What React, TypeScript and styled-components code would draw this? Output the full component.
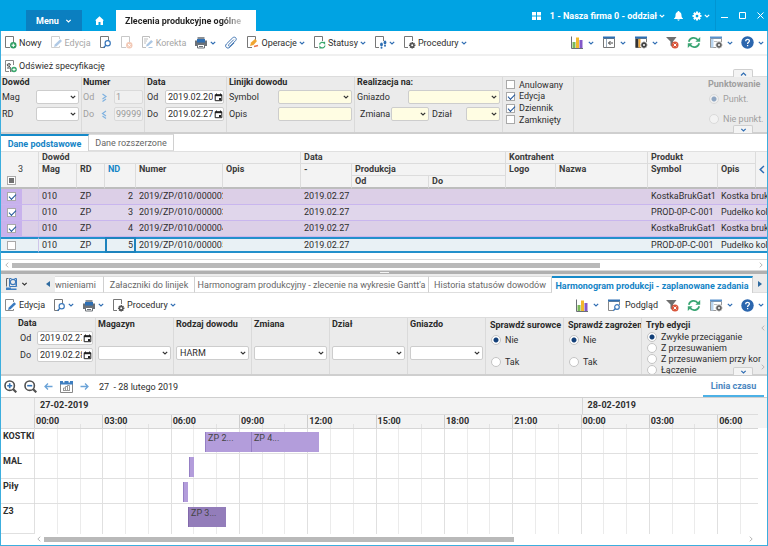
import React from "react";
import styled, { createGlobalStyle, css } from "styled-components";

const GlobalStyle = createGlobalStyle`
  * { box-sizing: border-box; }
  html, body { margin: 0; background: #fff; }
  body, button, input, select, table {
    font-family: Roboto, "Liberation Sans", sans-serif;
    font-size: 9px;
    line-height: 12px;
    color: #2e2e2e;
  }
  button { border: 0; background: none; padding: 0; margin: 0; }
  input, select { margin: 0; }
`;

const BLUE = "#00a3e3";
const LINK = "#2f6db3";

/* ---------- icons ---------- */

const Svg = styled.svg<{ $w: number; $h: number }>`
  display: block;
  flex: none;
  width: ${(p) => p.$w}px;
  height: ${(p) => p.$h}px;
  fill: none;
`;

type IconProps = { w?: number; h?: number; box?: string; children?: React.ReactNode };
const Icon = ({ w = 13, h = 13, box, children }: IconProps) => (
  <Svg $w={w} $h={h} viewBox={box ?? `0 0 ${w} ${h}`} aria-hidden="true">
    {children}
  </Svg>
);

const Chevron = ({ color = LINK, w = 6 }: { color?: string; w?: number }) => (
  <Icon w={w} h={4} box="0 0 6 4">
    <path d="M.8.8 3 3 5.2.8" stroke={color} strokeWidth="1.2" />
  </Icon>
);

const Sheet = () => <path d="M6 11.500H1.500V.500H9.500V6" stroke="#777" />;
const SheetCorner = ({ color = "#777" }: { color?: string }) => (
  <path d="M5 11.500H1.500V.500h8V5" stroke={color} />
);

const gearTeeth = "M0-3.600V3.600M-3.600 0H3.600M-2.500-2.500 2.500 2.500M-2.500 2.500 2.500-2.500";
const Gear = ({ x, y, s = 1, color = "#555", hole = "#fff" }: { x: number; y: number; s?: number; color?: string; hole?: string }) => (
  <g transform={`translate(${x} ${y}) scale(${s})`}>
    <path d={gearTeeth} stroke={color} strokeWidth="1.700" />
    <circle r="2.500" fill={color} />
    <circle r="1.100" fill={hole} />
  </g>
);

const NewIcon = () => (
  <Icon>
    <Sheet />
    <circle cx="9.300" cy="9.300" r="3.200" fill="#2e9e62" />
    <path d="M9.300 7.500v3.600M7.500 9.300h3.600" stroke="#fff" strokeWidth="1.100" />
  </Icon>
);
const EditIcon = ({ dim }: { dim?: boolean }) => (
  <Icon>
    <g opacity={dim ? 0.4 : 1}>
      <path d="M9.500 10v1.500h-8V.500h8V3" stroke="#8a8a8a" />
      <path d="m4 11 .800-2.600 5.400-5.200 1.800 1.800-5.400 5.200Z" fill="#3b7bc0" />
    </g>
  </Icon>
);
const PreviewIcon = () => (
  <Icon>
    <Sheet />
    <circle cx="8.700" cy="7.300" r="2.600" fill="#fff" stroke="#3b78bb" strokeWidth="1.200" />
    <path d="m6.900 9.200-2.400 2.500" stroke="#3b78bb" strokeWidth="1.400" />
  </Icon>
);
const DeleteIcon = () => (
  <Icon>
    <g opacity=".4">
      <Sheet />
      <circle cx="9.300" cy="9.300" r="3.200" fill="#e07a4a" />
      <path d="m8 8 2.600 2.600M10.600 8 8 10.600" stroke="#fff" />
    </g>
  </Icon>
);
const FixIcon = () => (
  <Icon>
    <g opacity=".42">
      <path d="M8.500 2V.500h-7v11H5M3 3h4M3 5h3M3 7h2" stroke="#666" />
      <path d="m5 10.500.700-2 4.500-4.500 1.800 1.800L7.200 10Z" fill="#3b7bc0" />
      <path d="M7.500 11.500h4" stroke="#3b7bc0" />
    </g>
  </Icon>
);
const PrintIcon = () => (
  <Icon w={14}>
    <path d="M3.500 1h7v3h-7z" fill="#8b8f94" />
    <path d="M1 4.500h12V10H1z" fill="#6b7076" />
    <path d="M3 3h8v3.500H3z" fill="#2f6fb3" />
    <path d="M3.500 8.500h7v3.500h-7z" fill="#fff" stroke="#6b7076" />
    <path d="M5 10.500h4" stroke="#6b7076" />
  </Icon>
);
const ClipIcon = () => (
  <Icon w={14}>
    <path
      d="m9.800 3.600-5 5c-.900 1.100.500 2.300 1.500 1.300l5.300-5.300c2-2.200-.900-4.700-3-2.700L2.400 8c-2.300 2.700 1 5.500 3.500 3.200l4.300-4.300"
      stroke="#3f74b2"
    />
  </Icon>
);
const OperateIcon = () => (
  <Icon>
    <Sheet />
    <path d="m4 10 1-3.500 4-3.500 2 2-3.500 4Z" fill="#f0a531" />
    <path d="m8 10.500 4-1" stroke="#e8744b" strokeWidth="1.500" />
  </Icon>
);
const StatusIcon = () => (
  <Icon>
    <SheetCorner />
    <path d="M6.500 8.500a2.900 2.900 0 0 1 5-1.200V5.800M12 9.500a2.900 2.900 0 0 1-5 1.500v1.500" stroke="#3aa76d" strokeWidth="1.300" />
  </Icon>
);
const StepsIcon = () => (
  <Icon>
    <SheetCorner />
    <ellipse cx="7.500" cy="8.500" rx="1.400" ry="2" fill="#2f6fb3" />
    <circle cx="7.500" cy="11.700" r="1" fill="#2f6fb3" />
    <ellipse cx="11" cy="6.500" rx="1.400" ry="2" fill="#2f6fb3" />
    <circle cx="11" cy="9.800" r="1" fill="#2f6fb3" />
  </Icon>
);
const ProcIcon = () => (
  <Icon>
    <SheetCorner />
    <Gear x={9.2} y={9.2} s={0.9} />
  </Icon>
);
const ChartIcon = () => (
  <Icon w={14}>
    <path d="M1.500.500v12H13" stroke="#6b7076" />
    <path d="M2.500 6h3v6h-3z" fill="#7cb95a" />
    <path d="M6 1.500h3V12H6z" fill="#f2b92c" />
    <path d="M9.500 4h3v8h-3z" fill="#8359c9" />
  </Icon>
);
const PanelIcon = () => (
  <Icon w={14}>
    <path d="M1.500 2.500h11v9h-11z" fill="#fff" stroke="#777" />
    <path d="M1 1.500h12" stroke="#2f6fb3" strokeWidth="2" />
    <path d="M4.500 3v8" stroke="#9ab" />
    <path d="M11 7H6.500M8.500 5l-2 2 2 2" stroke="#444" />
  </Icon>
);
const ColumnsIcon = () => (
  <Icon w={14}>
    <path d="M1.500 2.500h11v9h-11z" fill="#fff" stroke="#777" />
    <path d="M1 1.500h12" stroke="#2f6fb3" strokeWidth="2" />
    <path d="M2 3h2.500v8.500H2z" fill="#333" />
    <path d="M4.500 3h2v8.500h-2z" fill="#f0a531" />
    <circle cx="10" cy="9" r="3.700" fill="#fff" />
    <Gear x={10} y={9} s={0.9} color="#444" />
  </Icon>
);
const FilterIcon = () => (
  <Icon>
    <path d="M0 1h10.500L7 5.500v6l-2.500-2v-4Z" fill="#6f6f6f" />
    <circle cx="9" cy="9" r="3.500" fill="#d9553a" />
    <path d="m7.600 7.600 2.800 2.800M10.400 7.600l-2.800 2.800" stroke="#fff" />
  </Icon>
);
const RefreshIcon = () => (
  <Icon w={14}>
    <path d="M1.800 5.800C2.800 1.500 8.500.300 11 4.200M12.200 7.200C11.200 11.500 5.500 12.700 3 8.800" stroke="#3aa573" strokeWidth="1.700" />
    <path d="M13.200 1v4.800H8.400ZM.8 12V7.200h4.800Z" fill="#3aa573" />
  </Icon>
);
const ViewIcon = () => (
  <Icon w={14}>
    <path d="M1.500 2.500h11v9h-11z" fill="#fff" stroke="#999" />
    <path d="M1 1.500h12" stroke="#5a92cc" strokeWidth="2" />
    <path d="M2 3h2.500v8.500H2z" fill="#b9d4ee" />
    <path d="M5 5.500h7" stroke="#bbb" />
    <circle cx="10" cy="9" r="3.700" fill="#fff" />
    <Gear x={10} y={9} s={0.9} color="#666" />
  </Icon>
);
const WindowPreviewIcon = () => (
  <Icon w={14}>
    <path d="M6 11.500H1.500v-9h11V6" stroke="#888" />
    <path d="M1 1.500h12" stroke="#2f6fb3" strokeWidth="2" />
    <circle cx="10" cy="8" r="2.300" stroke="#3b78bb" strokeWidth="1.200" />
    <path d="m8.300 9.700-2.100 2.100" stroke="#3b78bb" strokeWidth="1.300" />
  </Icon>
);
const HelpIcon = () => (
  <Icon>
    <circle cx="6.500" cy="6.500" r="6.200" fill="#2b66ae" />
    <path d="M4.700 5.200c0-2.600 3.800-2.400 3.700-.200C8.300 6.300 6.600 6.400 6.600 8M6.600 8.900v1.400" stroke="#fff" strokeWidth="1.300" />
  </Icon>
);
const SpecIcon = () => (
  <Icon>
    <SheetCorner color="#888" />
    <path d="M3 5h3.500a1.600 1.600 0 1 0-.500 1.300M3 8h3" stroke="#555" />
    <path d="M6.500 7v5M6.500 11h4" stroke="#777" />
    <circle cx="10" cy="9.500" r="2.800" fill="#3aa76d" />
    <path d="M10 8v3M8.500 9.500h3" stroke="#fff" strokeWidth=".900" />
  </Icon>
);
const CalendarGlyph = () => (
  <Icon w={9} h={9}>
    <path d="M1.200 1.700h6.600v6H1.200z" stroke="#222" />
    <path d="M1 2.500h7" stroke="#222" strokeWidth="1.400" />
    <path d="M2.500.500v1.500M6.500.500v1.500" stroke="#222" />
    <path d="M5 5h2v2H5z" fill="#222" />
  </Icon>
);
const PagesIcon = () => (
  <Icon>
    <path d="M1.500.500v8M3.500.500h-2" stroke="#666" />
    <path d="M1 9.500h5v2.500H1zM6 10.500h5.500V12H6z" fill="#3f7fc1" />
    <circle cx="8" cy="4" r="2.700" stroke="#3b78bb" strokeWidth="1.200" />
    <path d="m9.800 6 2 2.300M6.500.500h-2v8H11.500V.500H9.500" stroke="#3b78bb" />
  </Icon>
);
const ZoomGlass = ({ plus }: { plus?: boolean }) => (
  <Icon>
    <circle cx="5.700" cy="5.700" r="4.700" stroke="#505050" strokeWidth="1.600" />
    <path d="m9 9 3.300 3.300" stroke="#505050" strokeWidth="2.200" />
    <path d={plus ? "M3.200 5.700h5M5.700 3.200v5" : "M3.200 5.700h5"} stroke="#2f6fb3" strokeWidth="1.600" />
  </Icon>
);
const Arrow = ({ back }: { back?: boolean }) => (
  <Icon w={9} h={9}>
    <path d={back ? "M8.500 4.500H1M4 1.500l-3 3 3 3" : "M.5 4.500H8M5 1.500l3 3-3 3"} stroke="#6ba3d8" strokeWidth="1.300" />
  </Icon>
);
const CalendarIcon = () => (
  <Icon>
    <path d="M.5 3.500h12v9H.5z" stroke="#888" />
    <path d="M0 1h3v1.500h1.500V1h4v1.500H10V1h3v3.500H0z" fill="#3f7fc1" />
    <path d="M3.500 10.500V8h2v2.500M5.500 10.500v-4h2v4M7.500 10.500v-5h2v5M3 10.500h7" stroke="#999" />
  </Icon>
);

/* ---------- title bar ---------- */

const TitleBar = styled.header`
  display: flex;
  align-items: flex-end;
  height: 31px;
  padding-left: 26px;
  background: ${BLUE};
  color: #fff;
`;
const MenuButton = styled.button`
  display: flex;
  align-items: center;
  justify-content: center;
  gap: 6px;
  width: 56px;
  height: 21px;
  background: #0b7fc0;
  color: #fff;
  font-weight: 700;
`;
const HomeButton = styled.button`
  display: grid;
  place-items: center;
  width: 34px;
  height: 21px;
`;
const DocTab = styled.button`
  width: 140px;
  height: 21px;
  padding: 0 9px;
  font-weight: 700;
  text-align: left;
  white-space: nowrap;
  overflow: hidden;
  color: transparent;
  background: linear-gradient(90deg, #222 106px, #aaa 120px, #ddd 131px) text, #fff;
`;
const TitleRight = styled.div`
  display: flex;
  align-items: center;
  align-self: stretch;
  gap: 5px;
  margin-left: auto;
`;
const TitleTools = styled.div`
  display: flex;
  align-items: center;
  gap: 9px;
`;
const TitleButton = styled.button`
  display: flex;
  align-items: center;
  gap: 2px;
  color: #fff;
  font-weight: 700;
`;
const WindowButtons = styled.div`
  display: flex;
  align-items: center;
  align-self: stretch;
  gap: 11px;
  padding: 0 4px 0 5px;
  border-left: 1px solid #0095d2;
`;

/* ---------- frame, toolbars ---------- */

const Page = styled.div`
  display: flex;
  flex-direction: column;
  min-height: 100vh;
`;
const Frame = styled.main`
  flex: 1;
  display: flex;
  flex-direction: column;
  min-width: 0;
  border: 1px solid #3caede;
  border-top: 0;
`;
const Toolbar = styled.div<{ $h: number; $line?: boolean }>`
  display: flex;
  align-items: center;
  height: ${(p) => p.$h}px;
  padding: 0 3px;
  background: #fff;
  ${(p) => p.$line && css`border-bottom: 2px solid #f0f0f0;`}
`;
const ToolButton = styled.button`
  display: flex;
  align-items: center;
  gap: 2px;
  white-space: nowrap;
  &:disabled { color: #a6a6a6; }
`;
const ToolGroup = styled.div`
  display: flex;
  align-items: center;
  gap: 8px;
`;
const ToolRight = styled(ToolGroup)`
  margin-left: auto;
  ${ToolButton} { gap: 4px; }
`;
const Tool = ({ icon, label, menu, disabled, name }: { icon: React.ReactNode; label?: string; menu?: boolean; disabled?: boolean; name?: string }) => (
  <ToolButton type="button" disabled={disabled} aria-label={label ? undefined : name}>
    {icon}
    {label && <span>{label}</span>}
    {menu && <Chevron />}
  </ToolButton>
);

/* ---------- filter panels ---------- */

const Filters = styled.form<{ $h: number }>`
  position: relative;
  display: flex;
  height: ${(p) => p.$h}px;
  background: #ebebeb;
  border-top: 1px solid #dcdcdc;
  border-bottom: 2px solid #cfcfcf;
`;
const Group = styled.fieldset<{ $w?: number; $pad?: number; $top?: number; $last?: boolean }>`
  display: flex;
  flex-direction: column;
  gap: 3px;
  min-width: 0;
  margin: 0;
  padding: ${(p) => p.$top ?? 0}px 2px 0 ${(p) => p.$pad ?? 2}px;
  border: 0;
  border-right: ${(p) => (p.$last ? 0 : 1)}px solid #dadada;
  overflow: hidden;
  ${(p) => (p.$w ? css`flex: 0 0 ${p.$w}px;` : css`flex: 1;`)}
`;
const StackGroup = styled(Group)`
  justify-content: space-between;
  padding-top: 1px;
  padding-bottom: 14px;
`;
const Heading = styled.div<{ $indent?: number; $dim?: boolean }>`
  flex: none;
  height: 10px;
  padding-left: ${(p) => p.$indent ?? 0}px;
  line-height: 11px;
  font-weight: 700;
  white-space: nowrap;
  color: ${(p) => (p.$dim ? "#9f9f9f" : "#2a2a2a")};
`;
const RadioHeading = styled(Heading)`
  height: 13px;
  line-height: 15px;
`;
const Field = styled.label<{ $label: number; $dim?: boolean }>`
  display: grid;
  grid-template-columns: ${(p) => p.$label}px 1fr;
  align-items: center;
  flex: none;
  white-space: nowrap;
  color: ${(p) => (p.$dim ? "#9f9f9f" : "inherit")};
`;
const FieldLine = styled.div<{ $cols: string; $indent: number }>`
  display: grid;
  grid-template-columns: ${(p) => p.$cols};
  align-items: center;
  column-gap: 3px;
  padding-left: ${(p) => p.$indent}px;
`;
const control = css`
  width: 100%;
  min-width: 0;
  height: 14px;
  border: 1px solid #cdcdcd;
  border-radius: 2px;
  padding: 0 3px;
  outline: 0;
`;
const TextInput = styled.input<{ $yellow?: boolean }>`
  ${control}
  background: ${(p) => (p.$yellow ? "#fffde3" : "#fff")};
  &:disabled { background: #f0f0f0; color: #9a9a9a; border-color: #dadada; padding: 0 0 0 1px; }
`;
const ControlBox = styled.span`
  position: relative;
  display: flex;
  align-items: center;
  min-width: 0;
`;
const ControlGlyph = styled.span<{ $right: number }>`
  position: absolute;
  right: ${(p) => p.$right}px;
  pointer-events: none;
`;
const SelectInput = styled.select<{ $yellow?: boolean }>`
  ${control}
  appearance: none;
  padding-right: 12px;
  background: ${(p) => (p.$yellow ? "#fffde3" : "#fff")};
`;
const DateInput = styled.input`
  ${control}
  background: #fff;
  padding: 0 10px 0 2px;
`;
const Select = ({ value = "", yellow, name }: { value?: string; yellow?: boolean; name?: string }) => (
  <ControlBox>
    <SelectInput $yellow={yellow} defaultValue={value} aria-label={name}>
      <option value={value}>{value}</option>
    </SelectInput>
    <ControlGlyph $right={3}><Chevron color="#333" /></ControlGlyph>
  </ControlBox>
);
const DateBox = ({ value }: { value: string }) => (
  <ControlBox>
    <DateInput defaultValue={value} />
    <ControlGlyph $right={1}><CalendarGlyph /></ControlGlyph>
  </ControlBox>
);
const Prefix = styled.span`
  display: grid;
  grid-template-columns: 13px 29px;
  align-items: center;
`;
const Compare = ({ less }: { less?: boolean }) => (
  <Icon w={7} h={9}>
    <path d={less ? "M5 1 1.500 3.500 5 6M5 8.500 1.500 6" : "M1.500 1 5 3.500 1.500 6M5 6 1.500 8.500"} stroke="#7fb2e0" strokeWidth="1.200" />
  </Icon>
);
const Options = styled.div<{ $gap?: number; $top?: number; $left?: number }>`
  display: flex;
  flex-direction: column;
  gap: ${(p) => p.$gap ?? 0}px;
  padding: ${(p) => p.$top ?? 0}px 0 0 ${(p) => p.$left ?? 1}px;
`;
const TightOptions = styled(Options)`
  margin-top: -3px;
`;
const Choice = styled.label<{ $h: number; $dim?: boolean }>`
  display: flex;
  align-items: center;
  gap: 4px;
  height: ${(p) => p.$h}px;
  white-space: nowrap;
  color: ${(p) => (p.$dim ? "#9f9f9f" : "inherit")};
`;
const CheckBox = styled.input.attrs({ type: "checkbox" })<{ $partial?: boolean }>`
  appearance: none;
  position: relative;
  display: block;
  flex: none;
  width: 9px;
  height: 9px;
  border: 1px solid #a9a9a9;
  background: #fff;
  &:checked::after {
    content: "";
    position: absolute;
    left: 1px;
    top: 1px;
    width: 6px;
    height: 3px;
    border-left: 1px solid #1f559b;
    border-bottom: 1px solid #1f559b;
    transform: rotate(-45deg);
  }
  ${(p) => p.$partial && css`
    &::after { content: ""; position: absolute; inset: 1px; background: #707070; }
  `}
`;
const Radio = styled.input.attrs({ type: "radio" })`
  appearance: none;
  flex: none;
  width: 10px;
  height: 10px;
  border: 1px solid #c4c4c4;
  border-radius: 50%;
  background: #fff;
  &:checked { background: radial-gradient(circle, #123f78 0 2px, #fff 3px); }
  &:disabled { border-color: #dadada; background: #f3f3f3; }
  &:disabled:checked { background: radial-gradient(circle, #8fa6c2 0 2px, #f0f0f0 3px); }
`;
const Flap = styled.button<{ $up?: boolean }>`
  position: absolute;
  right: 14px;
  ${(p) => (p.$up ? "top: -8px;" : "bottom: -1px;")}
  display: grid;
  place-items: center;
  width: 20px;
  height: 8px;
  border: 1px solid #cfcfcf;
  border-bottom: 0;
  border-radius: 2px 2px 0 0;
  background: #f4f4f4;
`;
const SideArrows = styled.div`
  display: flex;
  flex-direction: column;
  justify-content: space-between;
  padding: 7px 2px 4px 0;
`;

/* ---------- tabs ---------- */

const TabBar = styled.div<{ $h: number; $grey?: boolean }>`
  display: flex;
  align-items: stretch;
  height: ${(p) => p.$h}px;
  background: ${(p) => (p.$grey ? "#ececec" : "#fff")};
`;
const Tab = styled.button<{ $active?: boolean; $w: number; $cut?: boolean }>`
  display: flex;
  justify-content: ${(p) => (p.$cut ? "flex-start" : "center")};
  align-items: center;
  flex: 0 1 ${(p) => p.$w}px;
  overflow: hidden;
  white-space: nowrap;
  background: #fff;
  border-right: 1px solid #d0d0d0;
  border-top: ${(p) => (p.$active ? "2px solid #168ac9" : "1px solid #dcdcdc")};
  border-bottom: ${(p) => (p.$active ? "0" : "1px solid #dedede")};
  color: ${(p) => (p.$active ? "#1384c6" : "#666")};
  font-weight: ${(p) => (p.$active ? 700 : 400)};
`;
const TabLead = styled.div`
  display: flex;
  align-items: center;
  gap: 3px;
  flex: 0 0 54px;
  padding: 0 5px 0 4px;
  border-bottom: 1px solid #dedede;
`;
const TabTail = styled.div`
  display: flex;
  align-items: center;
  justify-content: center;
  flex: 1;
  border-bottom: 1px solid #dedede;
`;
const Push = styled.span`
  margin-left: auto;
`;

/* ---------- document table ---------- */

const GridBox = styled.div`
  border-top: 1px solid #e0e0e0;
  overflow: hidden;
`;
const DataTable = styled.table`
  width: 100%;
  table-layout: fixed;
  border-collapse: separate;
  border-spacing: 0;
  th, td { padding: 0 0 0 3px; text-align: left; white-space: nowrap; overflow: hidden; }
`;
const Th = styled.th<{ $h?: number; $sorted?: boolean; $flat?: boolean }>`
  height: ${(p) => p.$h ?? 12}px;
  vertical-align: top;
  background: #f3f3f3;
  border-right: 1px solid #dcdcdc;
  border-bottom: ${(p) => (p.$flat ? "1px solid #dcdcdc" : "2px solid #bdbdbd")};
  color: ${(p) => (p.$sorted ? "#1384c6" : "#3a3a3a")};
  line-height: 11px;
  font-weight: 700;
`;
const CornerCell = styled(Th)`
  vertical-align: bottom;
  font-weight: 400;
`;
const EdgeCell = styled(Th)`
  vertical-align: middle;
  border-right: 0;
`;
const CornerStack = styled.div`
  display: grid;
  grid-template-columns: 9px 1fr;
  column-gap: 2px;
  row-gap: 1px;
  padding: 0 0 2px 3px;
  justify-items: start;
  & > span { grid-column: 2; }
  & > input { grid-row: 2; }
`;
const Row = styled.tr<{ $tone: string; $line: string; $current?: boolean }>`
  height: 16px;
  td {
    height: 16px;
    background: ${(p) => p.$tone};
    border-bottom: 1px solid ${(p) => p.$line};
    line-height: 13px;
    ${(p) => p.$current && css`
      border-top: 2px solid #2390cb;
      border-bottom: 2px solid #2390cb;
      line-height: 12px;
    `}
  }
`;
const PickCell = styled.td<{ $on?: boolean }>`
  && {
    padding-left: 6px;
    ${(p) => p.$on && css`background: #c8b2ec;`}
  }
`;
const LineCell = styled.td`
  border-right: 1px solid #cfc6ea;
`;
const NumCell = styled.td<{ $focus?: boolean }>`
  && {
    text-align: right;
    padding: 0 3px 0 0;
    ${(p) => p.$focus && css`border: 2px solid #1d83bd; padding-right: 1px;`}
  }
`;

/* ---------- scrollbars & splitter ---------- */

const Scroll = styled.div<{ $h: number; $line?: boolean }>`
  display: flex;
  align-items: center;
  gap: 3px;
  height: ${(p) => p.$h}px;
  padding: 0 4px;
  background: #fff;
  ${(p) => p.$line && css`border-top: 1px solid #d8d8d8; border-bottom: 1px solid #d8d8d8;`}
`;
const Track = styled.div`
  flex: 1;
`;
const Thumb = styled.div<{ $pct: number }>`
  width: ${(p) => p.$pct}%;
  height: 5px;
  background: #b9b9b9;
`;
const Side = ({ right, color = "#b8b8b8", h = 6 }: { right?: boolean; color?: string; h?: number }) => (
  <Icon w={h === 6 ? 4 : 6} h={h} box="0 0 4 6">
    <path d={right ? "M.7.700 3.200 3 .7 5.300" : "M3.300.700.8 3l2.500 2.300"} stroke={color} />
  </Icon>
);
const HScroll = ({ pct, h, line }: { pct: number; h: number; line?: boolean }) => (
  <Scroll $h={h} $line={line}>
    <Side />
    <Track><Thumb $pct={pct} /></Track>
    <Side right />
  </Scroll>
);
const Splitter = styled.div`
  display: grid;
  place-items: center;
  height: 3px;
  background: #b0b0b0;
`;
const Grip = styled.div`
  width: 9px;
  height: 1px;
  background: #f4f4f4;
`;

/* ---------- timeline ---------- */

const TimelineTools = styled(ToolGroup)`
  gap: 7px;
`;
const Range = styled.span`
  padding-left: 3px;
  white-space: pre;
`;
const ViewTab = styled.button`
  align-self: stretch;
  width: 61px;
  margin-left: auto;
  border-bottom: 2px solid #4cb1e6;
  color: #4a86c0;
  font-weight: 700;
`;
const Timeline = styled.div`
  display: grid;
  grid-template-columns: 34px 1fr;
  border-top: 1px solid #cfcfcf;
  padding-right: 9px;
  background: linear-gradient(#f3f3f3 30px, #fff 30px);
`;
const HeadCorner = styled.div`
  height: 31px;
  border-right: 1px solid #dcdcdc;
  border-bottom: 1px solid #dcdcdc;
`;
const Head = styled.div`
  height: 31px;
  font-weight: 700;
  border-bottom: 1px solid #d6d6d6;
`;
const Hours = styled.div`
  display: grid;
  grid-template-columns: repeat(31, 20fr) 15fr;
  height: 100%;
`;
const Days = styled.div`
  display: grid;
  grid-template-columns: 960fr 310fr;
  height: 17px;
  border-bottom: 1px solid #dcdcdc;
  & > span { padding-left: 5px; line-height: 15px; }
  & > span + span { border-left: 1px solid #d6d6d6; }
`;
const HourRow = styled.div`
  height: 13px;
`;
const HourLabel = styled.span<{ $major: boolean }>`
  align-self: end;
  min-width: 0;
  height: ${(p) => (p.$major ? 13 : 4)}px;
  margin-left: -1px;
  padding-left: 1px;
  line-height: 13px;
  border-left: 1px solid ${(p) => (p.$major ? "#cdcdcd" : "#e2e2e2")};
`;
const RowLabel = styled.div<{ $h: number }>`
  height: ${(p) => p.$h}px;
  padding: 1px 0 0 2px;
  border-right: 1px solid #d2d2d2;
  border-bottom: 1px solid #e0e0e0;
  font-weight: 700;
  white-space: nowrap;
  overflow: hidden;
  &:last-of-type { border-bottom: 0; }
`;
const Lane = styled.div<{ $h: number; $last?: boolean }>`
  position: relative;
  height: ${(p) => p.$h}px;
  border-bottom: ${(p) => (p.$last ? 0 : 1)}px solid #e0e0e0;
`;
const HourLine = styled.span<{ $major: boolean }>`
  margin-left: -1px;
  border-left: 1px solid ${(p) => (p.$major ? "#e0e0e0" : "#ebebeb")};
`;
const Task = styled.div<{ $dark?: boolean }>`
  position: absolute;
  top: 3px;
  height: 20px;
  padding-left: 2px;
  overflow: hidden;
  white-space: nowrap;
  border-left: 1px solid ${(p) => (p.$dark ? "#8268ab" : "#957fc4")};
  background: ${(p) => (p.$dark ? "#937dba" : "#b39ddb")};
  color: #444;
`;
const TimelineScroll = styled.div`
  padding: 0 10px 0 32px;
`;

/* ---------- data ---------- */

const documents = [
  { nd: 2, symbol: "KostkaBrukGat1", name: "Kostka brukowa" },
  { nd: 3, symbol: "PROD-0P-C-001", name: "Pudełko kolorowe" },
  { nd: 4, symbol: "KostkaBrukGat1", name: "Kostka brukowa" },
  { nd: 5, symbol: "PROD-0P-C-001", name: "Pudełko kolorowe" },
];
const tones = ["#dccfe7", "#e0d6eb", "#dccfe7", "#e9f1f5"];

const SPAN = 31.75;
const hours = Array.from({ length: 32 }, (_, i) => i);
const lanes = [
  { name: "KOSTKI", tasks: [{ from: 7.47, to: 9.48, label: "ZP 2..." }, { from: 9.48, to: 12.48, label: "ZP 4..." }] },
  { name: "MAL", tasks: [{ from: 6.78, to: 6.98, label: "" }] },
  { name: "Piły", tasks: [{ from: 6.48, to: 6.71, label: "" }] },
  { name: "Z3", tasks: [{ from: 6.72, to: 8.41, label: "ZP 3...", dark: true }] },
];

const pct = (h: number) => `${(h / SPAN) * 100}%`;

export default function App() {
  return (
    <Page>
      <GlobalStyle />
      <TitleBar>
        <MenuButton type="button">Menu <Chevron color="#fff" w={7} /></MenuButton>
        <HomeButton type="button" aria-label="Start">
          <Icon w={9} h={9}>
            <path d="M4.500.300 0 4.500h1V9h2.500V6h2v3H8V4.500h1Z" fill="#fff" />
          </Icon>
        </HomeButton>
        <DocTab type="button">Zlecenia produkcyjne ogólne</DocTab>
        <TitleRight>
          <TitleTools>
            <TitleButton type="button" aria-label="Aplikacje">
              <Icon w={9} h={8}>
                <path d="M0 0h4v3.500H0zM5 0h4v3.500H5zM0 4.500h4V8H0zM5 4.500h4V8H5z" fill="#fff" />
              </Icon>
            </TitleButton>
            <TitleButton type="button">1 - Nasza firma 0 - oddział <Chevron color="#fff" /></TitleButton>
            <TitleButton type="button" aria-label="Powiadomienia">
              <Icon w={9} h={10}>
                <path d="M4.500 0c.700 0 1 .500 1 1C7 1.500 7.500 2.700 7.500 4.500c0 1.700.500 2.300 1.500 3V8H0v-.500c1-.700 1.500-1.300 1.500-3C1.500 2.700 2 1.500 3.500 1c0-.500.300-1 1-1ZM3.300 8.500h2.400c0 1.500-2.400 1.500-2.400 0Z" fill="#fff" />
              </Icon>
            </TitleButton>
            <TitleButton type="button" aria-label="Ustawienia">
              <Icon w={10} h={10}><Gear x={5} y={5} s={1.25} color="#fff" hole={BLUE} /></Icon>
              <Chevron color="#fff" />
            </TitleButton>
          </TitleTools>
          <WindowButtons>
            <TitleButton type="button" aria-label="Minimalizuj"><Icon w={7} h={7}><path d="M0 5.500h7" stroke="#fff" /></Icon></TitleButton>
            <TitleButton type="button" aria-label="Maksymalizuj"><Icon w={7} h={7}><path d="M.5.500h6v6h-6z" stroke="#fff" /></Icon></TitleButton>
            <TitleButton type="button" aria-label="Zamknij"><Icon w={7} h={7}><path d="m.5.500 6 6M6.500.500l-6 6" stroke="#fff" /></Icon></TitleButton>
          </WindowButtons>
        </TitleRight>
      </TitleBar>

      <Frame>
        <Toolbar $h={25} $line>
          <ToolGroup>
            <Tool icon={<NewIcon />} label="Nowy" />
            <Tool icon={<EditIcon dim />} label="Edycja" disabled />
            <Tool icon={<PreviewIcon />} name="Podgląd" />
            <Tool icon={<DeleteIcon />} name="Usuń" disabled />
            <Tool icon={<FixIcon />} label="Korekta" disabled />
            <Tool icon={<PrintIcon />} name="Drukuj" menu />
            <Tool icon={<ClipIcon />} name="Załączniki" />
            <Tool icon={<OperateIcon />} label="Operacje" menu />
            <Tool icon={<StatusIcon />} label="Statusy" menu />
            <Tool icon={<StepsIcon />} name="Przebieg" menu />
            <Tool icon={<ProcIcon />} label="Procedury" menu />
          </ToolGroup>
          <ToolRight>
            <Tool icon={<ChartIcon />} name="Wykres" menu />
            <Tool icon={<PanelIcon />} name="Panel" menu />
            <Tool icon={<ColumnsIcon />} name="Kolumny" menu />
            <Tool icon={<FilterIcon />} name="Wyczyść filtr" />
            <Tool icon={<RefreshIcon />} name="Odśwież" />
            <Tool icon={<ViewIcon />} name="Widok" menu />
            <Tool icon={<HelpIcon />} name="Pomoc" menu />
          </ToolRight>
        </Toolbar>
        <Toolbar $h={20}>
          <Tool icon={<SpecIcon />} label="Odśwież specyfikację" />
        </Toolbar>

        <Filters $h={58}>
          <Group $w={81} $pad={1}>
            <Heading>Dowód</Heading>
            <Field $label={34}><span>Mag</span><Select /></Field>
            <Field $label={34}><span>RD</span><Select /></Field>
          </Group>
          <Group $w={63} $pad={1}>
            <Heading>Numer</Heading>
            <Field $label={18} $dim><span>Od</span><Prefix><Compare /><TextInput disabled defaultValue="1" /></Prefix></Field>
            <Field $label={18} $dim><span>Do</span><Prefix><Compare less /><TextInput disabled defaultValue="99999" /></Prefix></Field>
          </Group>
          <Group $w={82}>
            <Heading>Data</Heading>
            <Field $label={18}><span>Od</span><DateBox value="2019.02.20" /></Field>
            <Field $label={18}><span>Do</span><DateBox value="2019.02.27" /></Field>
          </Group>
          <Group $w={128}>
            <Heading>Linijki dowodu</Heading>
            <Field $label={49}><span>Symbol</span><Select yellow /></Field>
            <Field $label={49}><span>Opis</span><TextInput $yellow /></Field>
          </Group>
          <Group $w={148}>
            <Heading>Realizacja na:</Heading>
            <Field $label={51}><span>Gniazdo</span><Select yellow /></Field>
            <FieldLine $cols="69px 1fr" $indent={3}>
              <Field $label={31}><span>Zmiana</span><Select yellow /></Field>
              <Field $label={34}><span>Dział</span><Select yellow /></Field>
            </FieldLine>
          </Group>
          <Group $w={71} $pad={0}>
            <Options $top={2} $left={3}>
              <Choice $h={11}><CheckBox />Anulowany</Choice>
              <Choice $h={12}><CheckBox defaultChecked />Edycja</Choice>
              <Choice $h={12}><CheckBox defaultChecked />Dziennik</Choice>
              <Choice $h={11}><CheckBox />Zamknięty</Choice>
            </Options>
          </Group>
          <Group $last />
          <Group $w={60} $last $pad={1} $top={2}>
            <Heading $dim>Punktowanie</Heading>
            <Options $gap={8} $top={1}>
              <Choice $h={12} $dim><Radio name="points" disabled defaultChecked />Punkt.</Choice>
              <Choice $h={12} $dim><Radio name="points" disabled />Nie punkt.</Choice>
            </Options>
          </Group>
          <Flap type="button" $up aria-label="Zwiń">
            <Icon w={7} h={4}><path d="m1 3.500 2.500-2.500L6 3.500" stroke={LINK} strokeWidth="1.200" /></Icon>
          </Flap>
          <Flap type="button" aria-label="Rozwiń"><Chevron w={7} /></Flap>
        </Filters>

        <TabBar $h={17}>
          <Tab type="button" $active $w={88}>Dane podstawowe</Tab>
          <Tab type="button" $w={85}>Dane rozszerzone</Tab>
        </TabBar>
        <GridBox>
          <DataTable>
            <colgroup>
              {[21, 17, 38, 28, 31, 87, 78, 51, 77, 77, 50].map((w, i) => <col key={i} width={w} />)}
              <col />
              {[70, 38, 11].map((w, i) => <col key={i} width={w} />)}
            </colgroup>
            <thead>
              <tr>
                <CornerCell rowSpan={3} colSpan={2}>
                  <CornerStack><CheckBox $partial aria-label="Zaznacz wszystko" /><span>3</span></CornerStack>
                </CornerCell>
                <Th colSpan={5} $flat>Dowód</Th>
                <Th colSpan={3} $flat>Data</Th>
                <Th colSpan={2} $flat>Kontrahent</Th>
                <Th colSpan={2} $flat>Produkt</Th>
                <EdgeCell rowSpan={3} aria-label="Przewiń"><Side color={LINK} h={9} /></EdgeCell>
              </tr>
              <tr>
                <Th rowSpan={2}>Mag</Th>
                <Th rowSpan={2}>RD</Th>
                <Th rowSpan={2} $sorted>ND</Th>
                <Th rowSpan={2}>Numer</Th>
                <Th rowSpan={2}>Opis</Th>
                <Th rowSpan={2}>-</Th>
                <Th colSpan={2} $flat>Produkcja</Th>
                <Th rowSpan={2}>Logo</Th>
                <Th rowSpan={2}>Nazwa</Th>
                <Th rowSpan={2}>Symbol</Th>
                <Th rowSpan={2}>Opis</Th>
              </tr>
              <tr>
                <Th $h={13}>Od</Th>
                <Th $h={13}>Do</Th>
              </tr>
            </thead>
            <tbody>
              {documents.map((d, i) => {
                const current = d.nd === 5;
                return (
                  <Row key={d.nd} $tone={tones[i]} $line={i < 3 ? "#c9b6ee" : "#2390cb"} $current={current}>
                    <PickCell $on={!current}><CheckBox defaultChecked={!current} aria-label={`Zlecenie ${d.nd}`} /></PickCell>
                    <LineCell />
                    <td>010</td>
                    <td>ZP</td>
                    <NumCell $focus={current}>{d.nd}</NumCell>
                    <td>2019/ZP/010/00000{d.nd}</td>
                    <td />
                    <td>2019.02.27</td>
                    <td /><td /><td /><td />
                    <td>{d.symbol}</td>
                    <td colSpan={2}>{d.name}</td>
                  </Row>
                );
              })}
            </tbody>
          </DataTable>
        </GridBox>
        <Toolbar $h={6} />
        <HScroll h={12} pct={79} line />
        <Splitter><Grip /></Splitter>
        <TabBar $h={2} $grey />

        <TabBar $h={17} $grey>
          <TabLead>
            <PagesIcon />
            <Chevron color="#333" w={7} />
            <Push><Icon w={4} h={6}><path d="M4 0v6L0 3Z" fill="#2f6a9f" /></Icon></Push>
          </TabLead>
          <Tab type="button" $w={49} $cut>wnieniami</Tab>
          <Tab type="button" $w={91}>Załaczniki do linijek</Tab>
          <Tab type="button" $w={234}>Harmonogram produkcyjny - zlecenie na wykresie Gantt'a</Tab>
          <Tab type="button" $w={123}>Historia statusów dowodów</Tab>
          <Tab type="button" $w={201} $active>Harmonogram produkcji - zaplanowane zadania</Tab>
          <TabTail><Icon w={4} h={6}><path d="M0 0v6l4-3Z" fill="#2f6a9f" /></Icon></TabTail>
        </TabBar>

        <Toolbar $h={24}>
          <ToolGroup>
            <Tool icon={<EditIcon />} label="Edycja" />
            <Tool icon={<PreviewIcon />} name="Podgląd" menu />
            <Tool icon={<PrintIcon />} name="Drukuj" menu />
            <Tool icon={<ProcIcon />} label="Procedury" menu />
          </ToolGroup>
          <ToolRight>
            <Tool icon={<ChartIcon />} name="Wykres" menu />
            <Tool icon={<WindowPreviewIcon />} label="Podgląd" />
            <Tool icon={<FilterIcon />} name="Wyczyść filtr" />
            <Tool icon={<RefreshIcon />} name="Odśwież" />
            <Tool icon={<ViewIcon />} name="Widok" menu />
            <Tool icon={<HelpIcon />} name="Pomoc" menu />
          </ToolRight>
        </Toolbar>

        <Filters $h={59}>
          <Group $w={95}>
            <Heading $indent={15}>Data</Heading>
            <FieldLine $cols="1fr" $indent={17}><Field $label={17}><span>Od</span><DateBox value="2019.02.27" /></Field></FieldLine>
            <FieldLine $cols="1fr" $indent={17}><Field $label={17}><span>Do</span><DateBox value="2019.02.28" /></Field></FieldLine>
          </Group>
          {[["Magazyn", ""], ["Rodzaj dowodu", "HARM"], ["Zmiana", ""], ["Dział", ""], ["Gniazdo", ""]].map(([name, value]) => (
            <StackGroup key={name} $w={78}>
              <Heading>{name}</Heading>
              <Select name={name} value={value} />
            </StackGroup>
          ))}
          {["Sprawdź surowce", "Sprawdź zagrożenia"].map((name) => (
            <Group key={name} $w={78} $pad={4}>
              <RadioHeading>{name}</RadioHeading>
              <Options $gap={10}>
                <Choice $h={12}><Radio name={name} defaultChecked />Nie</Choice>
                <Choice $h={12}><Radio name={name} />Tak</Choice>
              </Options>
            </Group>
          ))}
          <Group $pad={4} $last>
            <RadioHeading>Tryb edycji</RadioHeading>
            <TightOptions>
              <Choice $h={11}><Radio name="mode" defaultChecked />Zwykłe przeciąganie</Choice>
              <Choice $h={11}><Radio name="mode" />Z przesuwaniem</Choice>
              <Choice $h={11}><Radio name="mode" />Z przesuwaniem przy kor</Choice>
              <Choice $h={11}><Radio name="mode" />Łączenie</Choice>
            </TightOptions>
          </Group>
          <SideArrows><Side /><Side right /></SideArrows>
          <Flap type="button" aria-label="Rozwiń"><Chevron w={7} /></Flap>
        </Filters>

        <Toolbar $h={21}>
          <TimelineTools>
            <Tool icon={<ZoomGlass plus />} name="Powiększ" />
            <Tool icon={<ZoomGlass />} name="Pomniejsz" />
            <Tool icon={<Arrow back />} name="Wstecz" />
            <Tool icon={<CalendarIcon />} name="Kalendarz" />
            <Tool icon={<Arrow />} name="Dalej" />
            <Range>{"27  - 28 lutego 2019"}</Range>
          </TimelineTools>
          <ViewTab type="button">Linia czasu</ViewTab>
        </Toolbar>

        <Timeline>
          <HeadCorner />
          <Head>
            <Days><span>27-02-2019</span><span>28-02-2019</span></Days>
            <HourRow>
              <Hours>
                {hours.map((h) => (
                  <HourLabel key={h} $major={h % 3 === 0}>
                    {h % 3 === 0 ? `${String(h % 24).padStart(2, "0")}:00` : ""}
                  </HourLabel>
                ))}
              </Hours>
            </HourRow>
          </Head>
          {lanes.map((lane, i) => (
            <React.Fragment key={lane.name}>
              <RowLabel $h={i === 3 ? 30 : 25}>{lane.name}</RowLabel>
              <Lane $h={i === 3 ? 30 : 25} $last={i === 3}>
                <Hours>{hours.map((h) => <HourLine key={h} $major={h % 3 === 0} />)}</Hours>
                {lane.tasks.map((t) => (
                  <Task key={t.from} $dark={"dark" in t} style={{ left: pct(t.from), width: pct(t.to - t.from) }}>
                    {t.label}
                  </Task>
                ))}
              </Lane>
            </React.Fragment>
          ))}
        </Timeline>
        <TimelineScroll>
          <HScroll h={10} pct={67} />
        </TimelineScroll>
      </Frame>
    </Page>
  );
}
